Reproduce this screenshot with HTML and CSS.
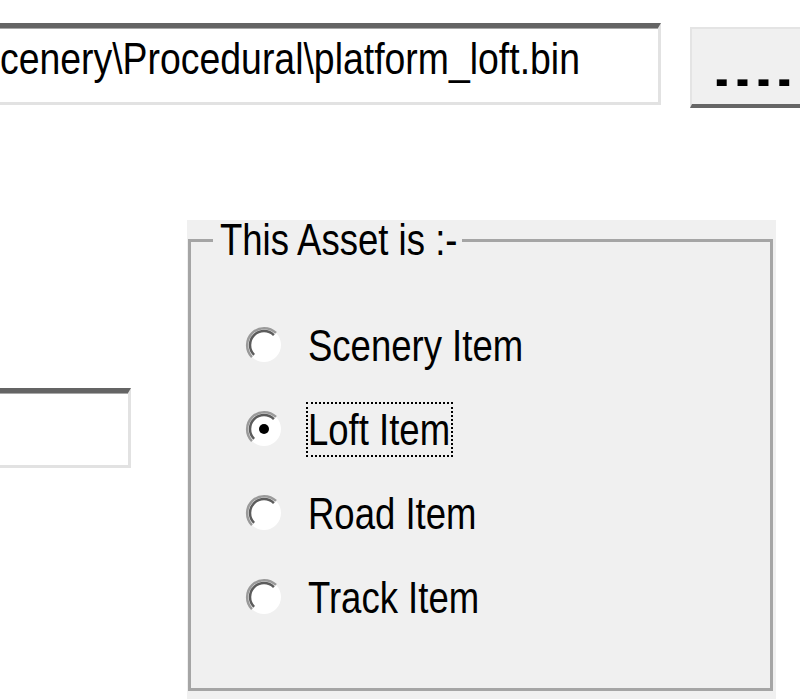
FILE: index.html
```html
<!DOCTYPE html>
<html>
<head>
<meta charset="utf-8">
<link rel="stylesheet" href="styles.css">
</head>
<body>
<div class="page">
  <div class="row1">
    <div class="path"><span class="cond path-text">Scenery\Procedural\platform_loft.bin</span></div>
    <div class="browse"><span class="dots">....</span></div>
  </div>
  <div class="row2">
    <div class="leftcol">
      <div class="field2"></div>
    </div>
    <div class="groupwrap">
      <fieldset class="group">
        <legend class="legend"><span class="cond">This Asset is :-</span></legend>
        <div class="opt">
          <svg class="radio" viewBox="0 0 40 40" width="40" height="40"><circle cx="20" cy="20" r="17" fill="#fff"/><path d="M7.98 32.02 A17 17 0 0 1 32.02 7.98" fill="none" stroke="#9a9a9a" stroke-width="2.5"/><path d="M10.1 29.9 A14 14 0 0 1 29.9 10.1" fill="none" stroke="#5c5c5c" stroke-width="2.5"/></svg>
          <span class="lbl"><span class="cond">Scenery Item</span></span>
        </div>
        <div class="opt">
          <svg class="radio" viewBox="0 0 40 40" width="40" height="40"><circle cx="20" cy="20" r="17" fill="#fff"/><path d="M7.98 32.02 A17 17 0 0 1 32.02 7.98" fill="none" stroke="#9a9a9a" stroke-width="2.5"/><path d="M10.1 29.9 A14 14 0 0 1 29.9 10.1" fill="none" stroke="#5c5c5c" stroke-width="2.5"/><circle cx="20" cy="20" r="5" fill="#000"/></svg>
          <span class="lbl focus"><span class="cond">Loft Item</span></span>
        </div>
        <div class="opt">
          <svg class="radio" viewBox="0 0 40 40" width="40" height="40"><circle cx="20" cy="20" r="17" fill="#fff"/><path d="M7.98 32.02 A17 17 0 0 1 32.02 7.98" fill="none" stroke="#9a9a9a" stroke-width="2.5"/><path d="M10.1 29.9 A14 14 0 0 1 29.9 10.1" fill="none" stroke="#5c5c5c" stroke-width="2.5"/></svg>
          <span class="lbl"><span class="cond">Road Item</span></span>
        </div>
        <div class="opt">
          <svg class="radio" viewBox="0 0 40 40" width="40" height="40"><circle cx="20" cy="20" r="17" fill="#fff"/><path d="M7.98 32.02 A17 17 0 0 1 32.02 7.98" fill="none" stroke="#9a9a9a" stroke-width="2.5"/><path d="M10.1 29.9 A14 14 0 0 1 29.9 10.1" fill="none" stroke="#5c5c5c" stroke-width="2.5"/></svg>
          <span class="lbl"><span class="cond">Track Item</span></span>
        </div>
      </fieldset>
    </div>
  </div>
</div>
</body>
</html>
```
FILE: styles.css
```css
html, body {
  margin: 0;
  padding: 0;
  background: #ffffff;
  overflow: hidden;
}
.page {
  width: 800px;
  height: 699px;
  overflow: hidden;
  font-family: "Liberation Sans", Arial, sans-serif;
  font-size: 44px;
  color: #000;
}
.cond {
  display: inline-block;
  white-space: nowrap;
  transform: scaleX(0.83);
  transform-origin: left center;
}
.row1 {
  display: flex;
  align-items: flex-start;
  padding-top: 23px;
  height: 85px;
}
.path {
  flex: none;
  box-sizing: border-box;
  margin-left: -60px;
  width: 721px;
  height: 82px;
  padding-left: 35px;
  background: #fff;
  border-top: 5px solid #646464;
  border-right: 3px solid #e2e2e2;
  border-bottom: 3px solid #e2e2e2;
  line-height: 62px;
  white-space: nowrap;
  overflow: hidden;
  box-shadow: inset 0 1px 0 #a8a8a8;
}
.path-text {
  transform: scaleX(0.85);
}
.browse {
  flex: none;
  box-sizing: border-box;
  margin-left: 29px;
  margin-top: 4px;
  width: 130px;
  height: 81px;
  background: #f0f0f0;
  border-top: 2px solid #e4e4e4;
  border-left: 2px solid #e4e4e4;
  border-bottom: 4px solid #666;
  padding-left: 20px;
  padding-top: 22px;
  line-height: 40px;
}
.dots {
  display: inline-block;
  font-weight: bold;
  font-size: 44px;
  letter-spacing: 0.8px;
  transform: scaleX(1.6);
  transform-origin: left center;
}
.row2 {
  display: flex;
  margin-top: 112px;
}
.leftcol {
  width: 187px;
  flex: none;
}
.field2 {
  box-sizing: border-box;
  margin-top: 168px;
  margin-left: -40px;
  width: 171px;
  height: 80px;
  background: #fff;
  border-top: 5px solid #646464;
  border-right: 3px solid #e2e2e2;
  border-bottom: 3px solid #e2e2e2;
  box-shadow: inset 0 1px 0 #a8a8a8;
}
.groupwrap {
  flex: none;
  width: 589px;
  height: 479px;
  background: #f0f0f0;
  padding: 0 3px 0 1px;
  box-sizing: border-box;
}
.group {
  margin: 0;
  padding: 0 0 0 53px;
  height: 471px;
  box-sizing: border-box;
  border: 3px solid #a5a5a5;
  min-width: 0;
}
.legend {
  box-sizing: border-box;
  margin-left: -31px;
  padding: 0 4px 0 7px;
  width: 249px;
  line-height: 40px;
  white-space: nowrap;
}
.opt {
  display: flex;
  align-items: center;
  height: 84px;
}
.opt:first-of-type {
  margin-top: 43px;
}
.radio {
  flex: none;
  margin-right: 22px;
}
.lbl {
  box-sizing: border-box;
  line-height: 51px;
  white-space: nowrap;
  border: 2px solid transparent;
  padding: 0 3px 0 0;
}
.lbl.focus {
  width: 147px;
  overflow: hidden;
  border: 2px dotted #000;
}
```
